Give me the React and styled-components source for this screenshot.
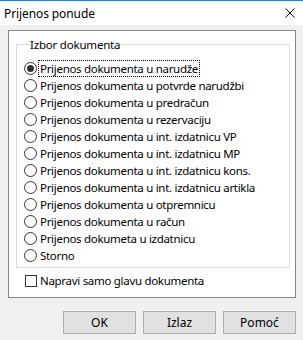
import React, { useState } from 'react'
import styled, { createGlobalStyle } from 'styled-components'

const GlobalStyle = createGlobalStyle`
    html, body {
        margin: 0;
        padding: 0;
        background: #f0f0f0;
    }
    body {
        font-family: "Noto Sans", "Liberation Sans", sans-serif;
        font-size: 11.5px;
        color: #000;
    }
`

const Window = styled.div`
    width: 303px;
    height: 340px;
    box-sizing: border-box;
    border-top: 1px solid #1883d7;
    background: #f0f0f0;
    display: flex;
    flex-direction: column;
`

const TitleBar = styled.div`
    height: 24px;
    background: #fff;
    display: flex;
    align-items: center;
    justify-content: space-between;
    padding: 0 8px 0 4px;
`

const Title = styled.span`
    font-size: 12px;
    letter-spacing: -0.1px;
`

const CloseIcon = () => (
    <svg width="10" height="10" viewBox="0 0 10 10">
        <path d="M0.5 0.5 L9.5 9.5 M9.5 0.5 L0.5 9.5" stroke="#000" strokeWidth="1" />
    </svg>
)

const Body = styled.div`
    flex: 1;
    padding: 5px 7px 0 8px;
    display: flex;
    flex-direction: column;
`

const Panel = styled.div`
    height: 268px;
    flex-shrink: 0;
    box-sizing: border-box;
    background: #fff;
    border: 1px solid #828790;
    padding: 6px 5px 0 7px;
`

const GroupBox = styled.fieldset`
    margin: 0;
    padding: 8px 0 3px 7px;
    border: 1px solid #dcdcdc;
    min-width: 0;
`

const Legend = styled.legend`
    padding: 0;
    margin-left: 6px;
    line-height: 15px;
    letter-spacing: -0.2px;
`

const OptionRow = styled.label`
    display: flex;
    align-items: center;
    height: 17px;
    gap: 2px;
`

const RadioCircle = styled.span`
    width: 13px;
    height: 13px;
    box-sizing: border-box;
    border: 1px solid #333;
    border-radius: 50%;
    background: #fff;
    display: flex;
    align-items: center;
    justify-content: center;
    flex-shrink: 0;

    &::after {
        content: '';
        width: 7px;
        height: 7px;
        border-radius: 50%;
        background: ${(p) => (p.$checked ? '#333' : 'transparent')};
    }
`

const OptionText = styled.span`
    padding: 0 1px;
    line-height: 15px;
    letter-spacing: -0.3px;
    outline: ${(p) => (p.$focused ? '1px dotted #000' : 'none')};
    outline-offset: 0;
`

const CheckRow = styled.label`
    display: flex;
    align-items: center;
    gap: 2px;
    margin: 6px 0 0 9px;
    height: 13px;
`

const CheckBox = styled.span`
    width: 12px;
    height: 12px;
    box-sizing: border-box;
    border: 1px solid #333;
    background: #fff;
`

const ButtonRow = styled.div`
    display: flex;
    justify-content: flex-end;
    gap: 7px;
    margin-top: 13px;
`

const Button = styled.button`
    width: 73px;
    height: 23px;
    box-sizing: border-box;
    background: #e1e1e1;
    border: 1px solid #adadad;
    font-family: inherit;
    font-size: 12px;
    color: #000;
    padding: 0;
`

const options = [
    'Prijenos dokumenta u narudže',
    'Prijenos dokumenta u potvrde narudžbi',
    'Prijenos dokumenta u predračun',
    'Prijenos dokumenta u rezervaciju',
    'Prijenos dokumenta u int. izdatnicu VP',
    'Prijenos dokumenta u int. izdatnicu MP',
    'Prijenos dokumenta u int. izdatnicu kons.',
    'Prijenos dokumenta u int. izdatnicu artikla',
    'Prijenos dokumenta u otpremnicu',
    'Prijenos dokumenta u račun',
    'Prijenos dokumeta u izdatnicu',
    'Storno',
]

const App = () => {
    const [selected, setSelected] = useState(0)

    return (
        <>
            <GlobalStyle />
            <Window>
                <TitleBar>
                    <Title>Prijenos ponude</Title>
                    <CloseIcon />
                </TitleBar>
                <Body>
                    <Panel>
                        <GroupBox>
                            <Legend>Izbor dokumenta</Legend>
                            {options.map((o, i) => (
                                <OptionRow key={o} onClick={() => setSelected(i)}>
                                    <RadioCircle $checked={selected === i} />
                                    <OptionText $focused={selected === i}>{o}</OptionText>
                                </OptionRow>
                            ))}
                        </GroupBox>
                        <CheckRow>
                            <CheckBox />
                            <OptionText>Napravi samo glavu dokumenta</OptionText>
                        </CheckRow>
                    </Panel>
                    <ButtonRow>
                        <Button>OK</Button>
                        <Button>Izlaz</Button>
                        <Button>Pomoć</Button>
                    </ButtonRow>
                </Body>
            </Window>
        </>
    )
}

export default App
